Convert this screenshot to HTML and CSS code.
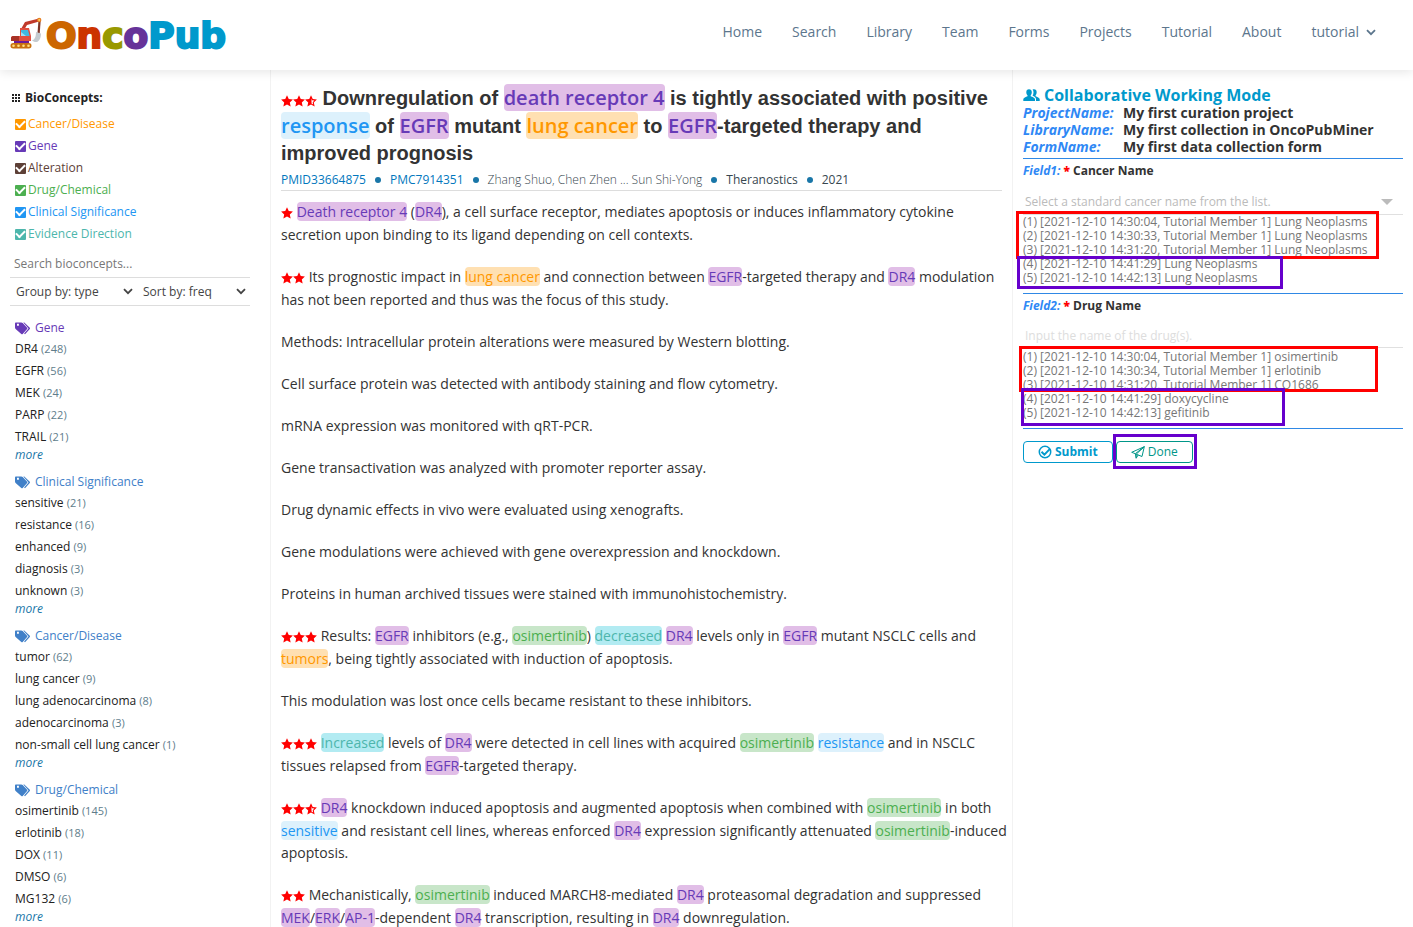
FILE: index.html
```html
<!DOCTYPE html>
<html lang="en">
<head>
<meta charset="utf-8">
<title>OncoPub</title>
<link rel="stylesheet" href="styles.css">
</head>
<body>
<svg class="sprite" width="0" height="0" aria-hidden="true">
  <symbol id="star" viewBox="0 0 24 24"><path d="M12 .6l3.5 7.6 8.3 1-6.200 5.700 1.700 8.200L12 19l-7.300 4.100 1.700-8.200L.2 9.200l8.300-1z"/></symbol>
  <symbol id="star-half" viewBox="0 0 24 24"><path fill-rule="evenodd" d="M12 .6l3.500 7.600 8.300 1-6.200 5.700 1.700 8.200L12 19l-7.300 4.100 1.700-8.200L.2 9.200l8.300-1zM13 7v10l3.300 2-.9-4.700 3.400-3.300-4.600-.5z"/></symbol>
  <symbol id="chevron" viewBox="0 0 10 7"><path d="M1 1.200l4 4 4-4" fill="none" stroke="currentColor" stroke-width="1.800"/></symbol>
  <symbol id="tags" viewBox="0 0 16 13"><path fill-rule="evenodd" d="M0 1.500C0 .8.400.4 1 .4h5.200c.6 0 1.100.2 1.500.6l4.400 4.700c.4.4.4 1 0 1.400L7.700 12c-.4.400-1 .4-1.400 0L.6 7C.2 6.600 0 6.200 0 5.600zM2 1.800v1.900h1.900V1.800z"/><path d="M8.300.4h1l5.500 5.400c.3.400.3.800 0 1.200L10 12.200l-.9-.8 4.400-5z"/></symbol>
</svg>

<header class="topbar">
  <a class="brand" href="#">
    <svg class="brand-icon" viewBox="0 0 32 32" width="32" height="32" aria-hidden="true">
      <path d="M11 12L15 5 29 1.500l1 2.700L17 8l-3 5z" fill="#c0392b"/>
      <path d="M28.500 3l-1 13 2.200.5 1-13z" fill="#7d3426"/>
      <path d="M26 15l5 1.500c0 4-1.500 7.500-4 8.500-2 .3-4-.5-5-1.500 3-1 4-4 4-8.500z" fill="#c4cbd0"/>
      <circle cx="29.200" cy="3" r="2.200" fill="#e67e22"/><circle cx="29.200" cy="3" r="1" fill="#ffd15c"/>
      <path d="M10 11h9l2 8v5H1v-3c0-1 .6-2 2-2h7z" fill="#e04f3f"/>
      <path d="M1 21c0-1 1-2 2-2h6v5H1z" fill="#a93226"/>
      <path d="M11 13h7l1.600 6H11z" fill="#3fb8e0"/><path d="M11 19v-4l5 4z" fill="#9be0f5"/>
      <path d="M4 24h15v2H4z" fill="#6a1b9a"/>
      <rect x="0.500" y="26" width="21" height="5.500" rx="2.700" fill="#c8700f"/>
      <g fill="#ffe082"><circle cx="3.500" cy="28.700" r="1.300"/><circle cx="8.500" cy="28.700" r="1.300"/><circle cx="13.500" cy="28.700" r="1.300"/><circle cx="18.500" cy="28.700" r="1.300"/></g>
    </svg>
    <span class="brand-name"><span class="b-orange">O</span><span class="b-red">n</span><span class="b-olive">c</span><span class="b-purple">o</span><span class="b-blue">Pub</span></span>
  </a>
  <nav class="nav">
    <a href="#">Home</a><a href="#">Search</a><a href="#">Library</a><a href="#">Team</a><a href="#">Forms</a><a href="#">Projects</a><a href="#">Tutorial</a><a href="#">About</a>
    <a href="#" class="nav-user">tutorial <svg width="10" height="7"><use href="#chevron"/></svg></a>
  </nav>
</header>

<div class="columns">
  <aside class="sidebar">
    <h2 class="side-title"><svg width="9" height="9" viewBox="0 0 9 9" aria-hidden="true"><path d="M0 0h2v2H0zM3 0h2v2H3zM6 0h2v2H6zM0 3h2v2H0zM3 3h2v2H3zM6 3h2v2H6zM0 6h2v2H0zM3 6h2v2H3zM6 6h2v2H6z"/></svg>BioConcepts:</h2>
    <div class="checks">
      <label class="check c-disease"><input type="checkbox" checked>Cancer/Disease</label>
      <label class="check c-gene"><input type="checkbox" checked>Gene</label>
      <label class="check c-alteration"><input type="checkbox" checked>Alteration</label>
      <label class="check c-drug"><input type="checkbox" checked>Drug/Chemical</label>
      <label class="check c-clinical"><input type="checkbox" checked>Clinical Significance</label>
      <label class="check c-evidence"><input type="checkbox" checked>Evidence Direction</label>
    </div>
    <input class="side-search" type="text" placeholder="Search bioconcepts..." aria-label="Search bioconcepts">
    <div class="side-selects">
      <div class="pick"><select aria-label="Group by"><option>Group by: type</option></select><svg width="10" height="7"><use href="#chevron"/></svg></div>
      <div class="pick"><select aria-label="Sort by"><option>Sort by: freq</option></select><svg width="10" height="7"><use href="#chevron"/></svg></div>
    </div>

    <section class="group">
      <h3 class="group-title c-gene"><svg width="16" height="13"><use href="#tags"/></svg>Gene</h3>
      <ul><li>DR4 <small>(248)</small></li><li>EGFR <small>(56)</small></li><li>MEK <small>(24)</small></li><li>PARP <small>(22)</small></li><li>TRAIL <small>(21)</small></li></ul>
      <a class="more" href="#">more</a>
    </section>
    <section class="group">
      <h3 class="group-title"><svg width="16" height="13"><use href="#tags"/></svg>Clinical Significance</h3>
      <ul><li>sensitive <small>(21)</small></li><li>resistance <small>(16)</small></li><li>enhanced <small>(9)</small></li><li>diagnosis <small>(3)</small></li><li>unknown <small>(3)</small></li></ul>
      <a class="more" href="#">more</a>
    </section>
    <section class="group">
      <h3 class="group-title"><svg width="16" height="13"><use href="#tags"/></svg>Cancer/Disease</h3>
      <ul><li>tumor <small>(62)</small></li><li>lung cancer <small>(9)</small></li><li>lung adenocarcinoma <small>(8)</small></li><li>adenocarcinoma <small>(3)</small></li><li>non-small cell lung cancer <small>(1)</small></li></ul>
      <a class="more" href="#">more</a>
    </section>
    <section class="group">
      <h3 class="group-title"><svg width="16" height="13"><use href="#tags"/></svg>Drug/Chemical</h3>
      <ul><li>osimertinib <small>(145)</small></li><li>erlotinib <small>(18)</small></li><li>DOX <small>(11)</small></li><li>DMSO <small>(6)</small></li><li>MG132 <small>(6)</small></li></ul>
      <a class="more" href="#">more</a>
    </section>
  </aside>

  <main class="article">
    <h1 class="title"><span class="stars"><svg><use href="#star"/></svg><svg><use href="#star"/></svg><svg><use href="#star-half"/></svg></span> Downregulation of <mark class="gene">death receptor 4</mark> is tightly associated with positive <mark class="clinical">response</mark> of <mark class="gene">EGFR</mark> mutant <mark class="disease">lung cancer</mark> to <mark class="gene">EGFR</mark>-targeted therapy and improved prognosis</h1>
    <div class="meta"><a href="#">PMID33664875</a><i class="dot"></i><a href="#">PMC7914351</a><i class="dot"></i><span class="authors">Zhang Shuo, Chen Zhen ... Sun Shi-Yong</span><i class="dot"></i><span>Theranostics</span><i class="dot"></i><span>2021</span></div>
    <div class="abstract">
      <p><span class="stars"><svg><use href="#star"/></svg></span> <mark class="gene">Death receptor 4</mark> (<mark class="gene">DR4</mark>), a cell surface receptor, mediates apoptosis or induces inflammatory cytokine secretion upon binding to its ligand depending on cell contexts.</p>
      <p><span class="stars"><svg><use href="#star"/></svg><svg><use href="#star"/></svg></span> Its prognostic impact in <mark class="disease">lung cancer</mark> and connection between <mark class="gene">EGFR</mark>-targeted therapy and <mark class="gene">DR4</mark> modulation has not been reported and thus was the focus of this study.</p>
      <p>Methods: Intracellular protein alterations were measured by Western blotting.</p>
      <p>Cell surface protein was detected with antibody staining and flow cytometry.</p>
      <p>mRNA expression was monitored with qRT-PCR.</p>
      <p>Gene transactivation was analyzed with promoter reporter assay.</p>
      <p>Drug dynamic effects in vivo were evaluated using xenografts.</p>
      <p>Gene modulations were achieved with gene overexpression and knockdown.</p>
      <p>Proteins in human archived tissues were stained with immunohistochemistry.</p>
      <p><span class="stars"><svg><use href="#star"/></svg><svg><use href="#star"/></svg><svg><use href="#star"/></svg></span> Results: <mark class="gene">EGFR</mark> inhibitors (e.g., <mark class="drug">osimertinib</mark>) <mark class="evidence">decreased</mark> <mark class="gene">DR4</mark> levels only in <mark class="gene">EGFR</mark> mutant NSCLC cells and <mark class="disease">tumors</mark>, being tightly associated with induction of apoptosis.</p>
      <p>This modulation was lost once cells became resistant to these inhibitors.</p>
      <p><span class="stars"><svg><use href="#star"/></svg><svg><use href="#star"/></svg><svg><use href="#star"/></svg></span> <mark class="evidence">Increased</mark> levels of <mark class="gene">DR4</mark> were detected in cell lines with acquired <mark class="drug">osimertinib</mark> <mark class="clinical">resistance</mark> and in NSCLC tissues relapsed from <mark class="gene">EGFR</mark>-targeted therapy.</p>
      <p><span class="stars"><svg><use href="#star"/></svg><svg><use href="#star"/></svg><svg><use href="#star-half"/></svg></span> <mark class="gene">DR4</mark> knockdown induced apoptosis and augmented apoptosis when combined with <mark class="drug">osimertinib</mark> in both <mark class="clinical">sensitive</mark> and resistant cell lines, whereas enforced <mark class="gene">DR4</mark> expression significantly attenuated <mark class="drug">osimertinib</mark>-induced apoptosis.</p>
      <p><span class="stars"><svg><use href="#star"/></svg><svg><use href="#star"/></svg></span> Mechanistically, <mark class="drug">osimertinib</mark> induced MARCH8-mediated <mark class="gene">DR4</mark> proteasomal degradation and suppressed <mark class="gene">MEK</mark>/<mark class="gene">ERK</mark>/<mark class="gene">AP-1</mark>-dependent <mark class="gene">DR4</mark> transcription, resulting in <mark class="gene">DR4</mark> downregulation.</p>
    </div>
  </main>

  <aside class="curation">
    <h2 class="mode"><svg width="17" height="12" viewBox="0 0 17 12" aria-hidden="true"><path d="M6 .3c1.800 0 2.800 1.200 2.800 3 0 1.300-.5 2.300-1.100 3v1c1.500.7 4.300 1.300 4.300 3V12H.3v-1.700c0-1.700 2.700-2.300 4.200-3v-1c-.7-.7-1.200-1.700-1.200-3 0-1.800.9-3 2.700-3z"/><path d="M11 .3c1.800 0 2.700 1.200 2.700 3 0 1.300-.4 2.300-1.100 3v1c1.500.7 4.100 1.300 4.100 3V12H13v-2c0-1.800-1.800-2.500-3.400-3.300.5-.9.900-2 .9-3.400 0-1.100-.3-2-.9-2.700.4-.2.900-.3 1.400-.3z"/></svg>Collaborative Working Mode</h2>
    <dl class="facts">
      <dt>ProjectName:</dt><dd>My first curation project</dd>
      <dt>LibraryName:</dt><dd>My first collection in OncoPubMiner</dd>
      <dt>FormName:</dt><dd>My first data collection form</dd>
    </dl>
    <form>
      <div class="field">
        <label for="cancer"><em>Field1:</em> <b>*</b> Cancer Name</label>
        <div class="combo">
          <select id="cancer"><option>Select a standard cancer name from the list.</option></select>
          <svg width="12" height="6" viewBox="0 0 12 6" aria-hidden="true"><path d="M0 0h12L6 6z"/></svg>
        </div>
        <div class="history">
          <div>(1) [2021-12-10 14:30:04, Tutorial Member 1] Lung Neoplasms</div>
          <div>(2) [2021-12-10 14:30:33, Tutorial Member 1] Lung Neoplasms</div>
          <div>(3) [2021-12-10 14:31:20, Tutorial Member 1] Lung Neoplasms</div>
          <div>(4) [2021-12-10 14:41:29] Lung Neoplasms</div>
          <div>(5) [2021-12-10 14:42:13] Lung Neoplasms</div>
          <span class="frame red frame-a"></span><span class="frame violet frame-b"></span>
        </div>
      </div>
      <div class="field">
        <label for="drug"><em>Field2:</em> <b>*</b> Drug Name</label>
        <input class="entry" id="drug" type="text" placeholder="Input the name of the drug(s).">
        <div class="history">
          <div>(1) [2021-12-10 14:30:04, Tutorial Member 1] osimertinib</div>
          <div>(2) [2021-12-10 14:30:34, Tutorial Member 1] erlotinib</div>
          <div>(3) [2021-12-10 14:31:20, Tutorial Member 1] CO1686</div>
          <div>(4) [2021-12-10 14:41:29] doxycycline</div>
          <div>(5) [2021-12-10 14:42:13] gefitinib</div>
          <span class="frame red frame-c"></span><span class="frame violet frame-d"></span>
        </div>
      </div>
      <div class="actions">
        <button class="btn submit" type="submit"><svg width="14" height="14" viewBox="0 0 14 14" aria-hidden="true"><circle cx="7" cy="7" r="5.700" fill="none" stroke="currentColor" stroke-width="1.500"/><path d="M3.500 6.700l2.900 2.900L12.200 3.600" fill="none" stroke="currentColor" stroke-width="2"/></svg>Submit</button>
        <div class="framed">
          <button class="btn done" type="button"><svg width="14" height="13" viewBox="0 0 14 13" aria-hidden="true"><path d="M13.300.7L.7 6.300l3.600 1.400zM4.300 7.700l.9 4.500 2-3.300M13.300.7L5.200 8.200l5.800 2.300zM5.200 8.200v4" fill="none" stroke="currentColor" stroke-width="1"/></svg>Done</button>
          <span class="frame violet frame-e"></span>
        </div>
      </div>
    </form>
  </aside>
</div>
</body>
</html>
```
FILE: styles.css
```css
* { box-sizing: border-box; }
body {
  margin: 0;
  height: 100vh;
  display: flex;
  flex-direction: column;
  background: #fff;
  color: #333;
  font: 14px/22px "Open Sans", sans-serif;
}
a { color: inherit; text-decoration: none; }
h1, h2, h3, p, ul, dl, dd { margin: 0; }
ul { padding: 0; list-style: none; }
em, i { font-style: italic; }
svg { fill: currentColor; flex: none; }
.sprite { position: absolute; }
input, select, button { font: inherit; color: inherit; }
input, select { border: 0; border-radius: 0; background: none; appearance: none; outline: 0; min-width: 0; }

.topbar {
  flex: none;
  height: 70px;
  padding: 0 37px 0 10px;
  display: flex;
  align-items: center;
  justify-content: space-between;
  background: #fff;
  box-shadow: 0 2px 10px rgba(0, 0, 0, .1);
  position: relative;
  z-index: 1;
}
.brand { display: flex; align-items: center; gap: 4px; }
.brand-icon { margin-bottom: 4px; }
.brand-name { padding-top: 2px; font: bold 36px/40px "DejaVu Sans", sans-serif; -webkit-text-stroke: 2px; }
.b-orange { color: #cc6600; }
.b-red { color: #cc3300; }
.b-olive { color: #999900; }
.b-purple { color: #663399; }
.b-blue { color: #0099cc; }
.nav { display: flex; gap: 30px; color: #5c768d; padding-bottom: 6px; }
.nav-user { display: flex; align-items: center; gap: 7px; }

.columns { flex: 1; min-height: 0; display: grid; grid-template-columns: 271px 1fr 401px; }
.columns > * { overflow-y: auto; scrollbar-width: none; }
.sidebar { padding: 17px 20px 0 10px; border-right: 1px solid #f2f2f2; font-size: 12px; }
.side-title { display: flex; align-items: center; gap: 4px; padding-left: 2px; font-size: 12px; line-height: 22px; color: #222; }
.checks { padding: 4px 0 5px 5px; }
.check { display: flex; align-items: center; gap: 2px; }
.check input { width: 11px; height: 11px; margin: 0; display: grid; place-items: center; border-radius: 1px; background: currentColor; }
.check input:checked::before { content: ""; width: 7px; height: 4px; margin-bottom: 2px; border: solid #fff; border-width: 0 0 2px 2px; transform: rotate(-45deg); }
.c-disease { color: #ff9800; }
.c-gene { color: #673ab7; }
.c-alteration { color: #5d4037; }
.c-drug { color: #4caf50; }
.c-clinical { color: #2196f3; }
.c-evidence { color: #4db6ac; }
.side-search { width: 100%; height: 28px; padding: 0 4px; border-bottom: 1px solid #ddd; display: block; }
::placeholder { color: #777; opacity: 1; }
.side-selects { display: grid; grid-template-columns: 127fr 113fr; height: 28px; border-bottom: 1px solid #ddd; color: #444; }
.pick { display: grid; align-items: center; padding: 0 4px 0 6px; }
.pick > *, .combo > * { grid-area: 1 / 1; }
.pick svg { justify-self: end; pointer-events: none; }
.pick select, .combo select { width: 100%; padding: 0; }
.group { margin-top: 10px; padding-left: 5px; color: #212121; }
.side-selects + .group { margin-top: 12px; }
.group-title { display: flex; align-items: center; gap: 4px; font-size: 12px; line-height: 20px; font-weight: 400; color: #4080c8; }
.group-title.c-gene { color: #673ab7; }
.group small { font-size: 11px; color: #607d8b; }
.more { display: block; line-height: 14px; font-style: italic; color: #1976a8; }

.article { padding: 14px 2px 0 10px; }
.title { font: bold 20px/26px "Liberation Sans", sans-serif; }
mark { color: inherit; background: none; border-radius: 4px; }
.title mark { display: inline-block; font: 600 20px/27px "Open Sans", sans-serif; margin-bottom: 1px; }
mark.gene { color: #673ab7; background: #e1bee7; }
mark.disease { color: #ff9800; background: #ffe0b2; }
mark.drug { color: #4caf50; background: #c8e6c9; }
mark.clinical { color: #2196f3; background: #ddf1fc; }
mark.evidence { color: #4db6ac; background: #b2ebf2; }
.stars { display: inline-flex; align-items: center; height: 22px; vertical-align: -2px; color: #f00; }
.stars svg { width: 12px; height: 12px; }
.meta { display: flex; align-items: center; gap: 9px; margin-right: 8px; padding-top: 3px; border-bottom: 1px solid #ddd; font-size: 12px; line-height: 21px; color: #37474f; }
.meta a { color: #0277bd; }
.authors { font-weight: 300; }
.dot { width: 6px; height: 6px; border-radius: 50%; background: #1976a8; }
.abstract { display: grid; gap: 20px; padding-top: 10px; }

.curation { padding: 15px 10px 0; border-left: 1px solid #f2f2f2; font-size: 12px; }
.mode { display: flex; align-items: center; gap: 4px; font-size: 16px; line-height: 20px; font-weight: 700; color: #0099cc; }
.facts { display: grid; grid-template-columns: 100px 1fr; margin-top: -1px; padding-bottom: 3px; border-bottom: 1px solid #2f88e5; font-size: 14px; line-height: 17px; font-weight: 700; }
.facts dt, .field em { font-style: italic; font-weight: 700; color: #2f88f5; }
.field { border-bottom: 1px solid #2f88e5; padding: 1px 0 8px; }
.field label { display: block; font-weight: 700; line-height: 22px; }
.field b { color: #f00; }
.combo { display: grid; align-items: center; margin-top: 7px; padding: 0 10px 0 2px; height: 26px; border-bottom: 1px solid #e0e0e0; color: #bbb; }
.combo svg { justify-self: end; pointer-events: none; }
.entry { display: block; width: 100%; height: 24px; margin: 7px 0 2px; padding: 0 2px; border-bottom: 1px solid #e0e0e0; }
.entry::placeholder { color: #ddd; }
.history { position: relative; line-height: 14px; color: #777; }
.frame { position: absolute; border: 3px solid; pointer-events: none; }
.red { border-color: #f00; }
.violet { border-color: #60c; }
.frame-a { left: -7px; top: -4px; width: 363px; height: 48px; }
.frame-b { left: -6px; top: 41px; width: 266px; height: 33px; }
.frame-c { left: -4px; top: -4px; width: 359px; height: 46px; }
.frame-d { left: -2px; top: 38px; width: 264px; height: 38px; }
.frame-e { inset: -7px -4px -6px -3px; }
.actions { display: flex; gap: 3px; padding-top: 12px; }
.framed { position: relative; }
.btn { display: flex; align-items: center; justify-content: center; gap: 3px; height: 22px; padding: 0 14px; border: 1px solid; border-radius: 4px; background: #fff; line-height: 20px; }
.submit { font-weight: 700; color: #0099cc; }
.done { color: #009688; }
```
